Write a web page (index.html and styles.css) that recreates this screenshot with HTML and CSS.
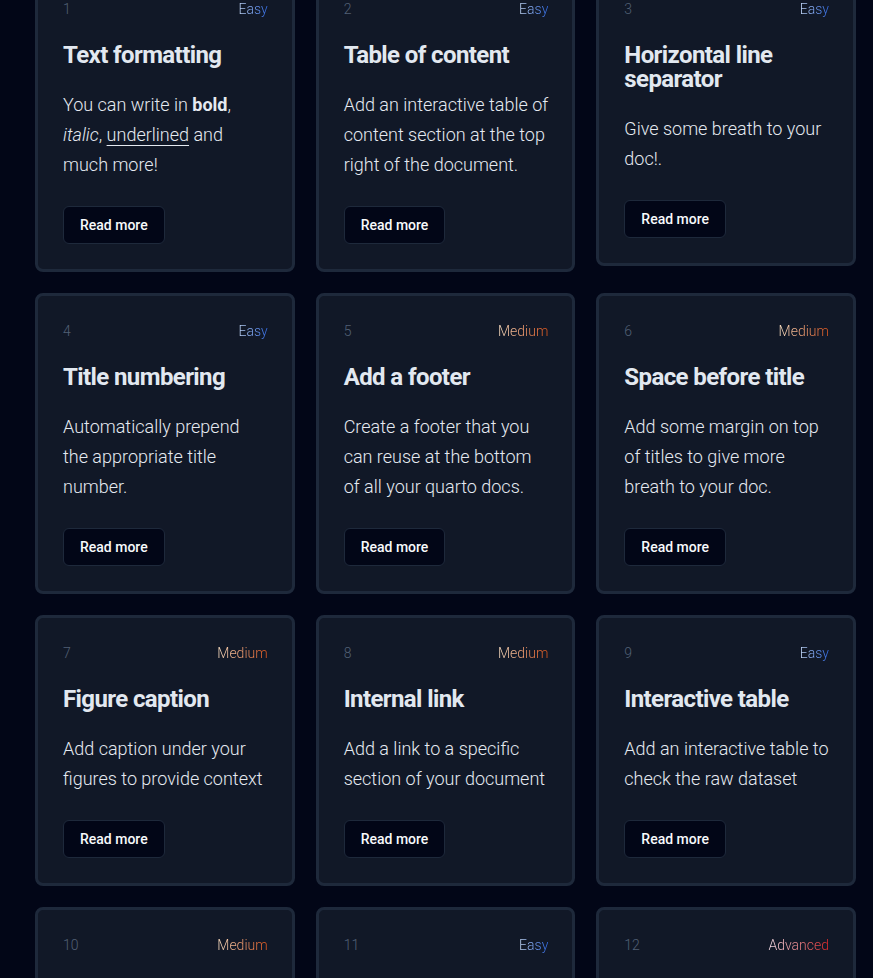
FILE: index.html
```html
<!DOCTYPE html>
<html lang="en">
<head>
    <meta charset="UTF-8">
    <meta name="viewport" content="width=device-width, initial-scale=1.0">
    <title>Quarto tips</title>
    <link rel="stylesheet" href="styles.css">
</head>
<body>

<main class="tips-grid">
    <article class="card">
        <div class="card-head"><span class="num">1</span><span class="level easy">Easy</span></div>
        <h3>Text formatting</h3>
        <p>You can write in <b>bold</b>, <i>italic</i>, <u>underlined</u> and much more!</p>
        <a href="#" class="btn">Read more</a>
    </article>
    <article class="card">
        <div class="card-head"><span class="num">2</span><span class="level easy">Easy</span></div>
        <h3>Table of content</h3>
        <p>Add an interactive table of content section at the top right of the document.</p>
        <a href="#" class="btn">Read more</a>
    </article>
    <article class="card">
        <div class="card-head"><span class="num">3</span><span class="level easy">Easy</span></div>
        <h3>Horizontal line separator</h3>
        <p>Give some breath to your doc!.</p>
        <a href="#" class="btn">Read more</a>
    </article>

    <article class="card">
        <div class="card-head"><span class="num">4</span><span class="level easy">Easy</span></div>
        <h3>Title numbering</h3>
        <p>Automatically prepend the appropriate title number.</p>
        <a href="#" class="btn">Read more</a>
    </article>
    <article class="card">
        <div class="card-head"><span class="num">5</span><span class="level medium">Medium</span></div>
        <h3>Add a footer</h3>
        <p>Create a footer that you can reuse at the bottom of all your quarto docs.</p>
        <a href="#" class="btn">Read more</a>
    </article>
    <article class="card">
        <div class="card-head"><span class="num">6</span><span class="level medium">Medium</span></div>
        <h3>Space before title</h3>
        <p>Add some margin on top of titles to give more breath to your doc.</p>
        <a href="#" class="btn">Read more</a>
    </article>

    <article class="card">
        <div class="card-head"><span class="num">7</span><span class="level medium">Medium</span></div>
        <h3>Figure caption</h3>
        <p>Add caption under your figures to provide context</p>
        <a href="#" class="btn">Read more</a>
    </article>
    <article class="card">
        <div class="card-head"><span class="num">8</span><span class="level medium">Medium</span></div>
        <h3>Internal link</h3>
        <p>Add a link to a specific section of your document</p>
        <a href="#" class="btn">Read more</a>
    </article>
    <article class="card">
        <div class="card-head"><span class="num">9</span><span class="level easy">Easy</span></div>
        <h3>Interactive table</h3>
        <p>Add an interactive table to check the raw dataset</p>
        <a href="#" class="btn">Read more</a>
    </article>

    <article class="card">
        <div class="card-head"><span class="num">10</span><span class="level medium">Medium</span></div>
        <h3>Callouts</h3>
        <p>Highlight a piece of content with a colored callout box.</p>
        <a href="#" class="btn">Read more</a>
    </article>
    <article class="card">
        <div class="card-head"><span class="num">11</span><span class="level easy">Easy</span></div>
        <h3>Code folding</h3>
        <p>Hide your code chunks behind a toggle button.</p>
        <a href="#" class="btn">Read more</a>
    </article>
    <article class="card">
        <div class="card-head"><span class="num">12</span><span class="level advanced">Advanced</span></div>
        <h3>Custom theme</h3>
        <p>Write your own scss theme to fully control the look.</p>
        <a href="#" class="btn">Read more</a>
    </article>
</main>

</body>
</html>
```

FILE: styles.css
```css
body {
    font-family: Roboto, "Liberation Sans", Arial, sans-serif;
    background-color: #020617;
    color: #e2e8f0;
    margin: 0;
}

.tips-grid {
    display: grid;
    grid-template-columns: repeat(3, 1fr);
    gap: 21px 21px;
    align-items: start;
    padding: 0 17px 40px 35px;
    margin-top: -29px;
}

.card {
    background-color: #111827;
    border: 3px solid #1e293b;
    border-radius: 8px;
    padding: 25px 24px 25px 25px;
}

.card-head {
    display: flex;
    justify-content: space-between;
    align-items: center;
    height: 20px;
    font-size: 14px;
    font-weight: 300;
}

.num {
    color: #526075;
}

.level {
    background-clip: text;
    -webkit-background-clip: text;
    color: transparent;
}

.level.easy {
    background-image: linear-gradient(90deg, #c7dcfb, #2f6ae6);
}

.level.medium {
    background-image: linear-gradient(90deg, #fde2c4, #e2551a);
}

.level.advanced {
    background-image: linear-gradient(90deg, #fbe4ee, #dc2626);
}

h3 {
    margin: 24px 0 23px;
    font-size: 24px;
    line-height: 24px;
    font-weight: 700;
    letter-spacing: -0.6px;
    color: #e2e8f0;
}

p {
    margin: 0 0 26px;
    font-size: 18px;
    line-height: 30px;
    font-weight: 300;
    color: #e5eaf1;
}

p b {
    font-weight: 700;
}

p u {
    text-underline-offset: 4px;
}

.btn {
    display: inline-block;
    height: 38px;
    line-height: 36px;
    box-sizing: border-box;
    padding: 0 16px;
    background-color: #020617;
    border: 1px solid #1e293b;
    border-radius: 6px;
    color: #f8fafc;
    font-size: 14px;
    font-weight: 500;
    text-decoration: none;
}
```
